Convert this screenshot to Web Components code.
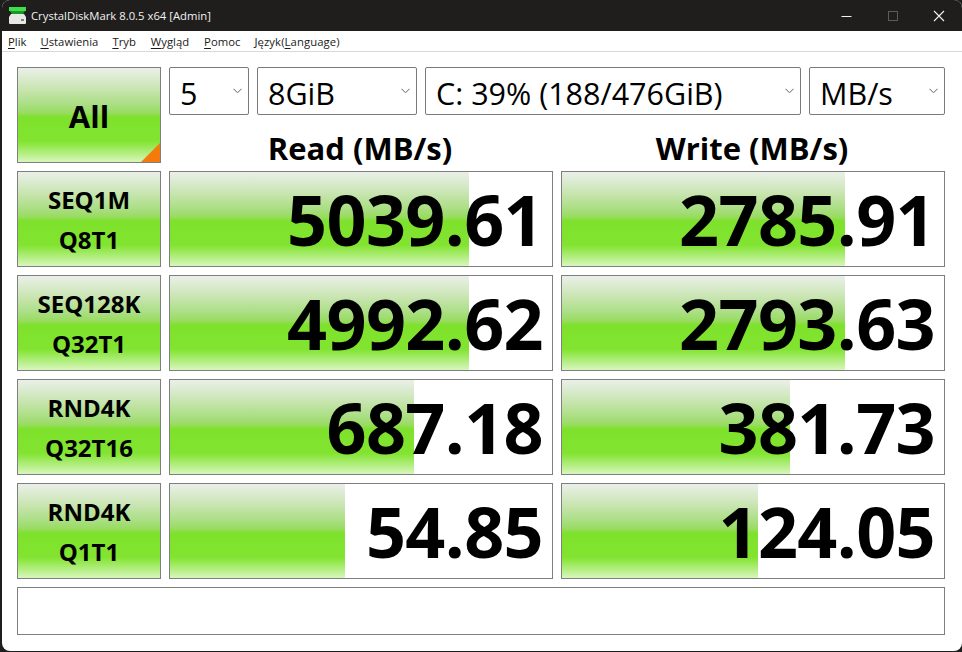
<!DOCTYPE html>
<html lang="pl">
<head>
<meta charset="utf-8">
<title>CrystalDiskMark</title>
<style>
  html, body { margin: 0; padding: 0; background: #1e1e1e; }
  body { font-family: "Open Sans", "Noto Sans", sans-serif; width: 962px; height: 652px; overflow: hidden; }
</style>
</head>
<body>
<cdm-window>
  <cdm-titlebar slot="title">CrystalDiskMark 8.0.5 x64 [Admin]</cdm-titlebar>
  <cdm-menubar slot="menu"></cdm-menubar>

  <cdm-button big corner>All</cdm-button>
  <cdm-controls>
    <cdm-select w="80">5</cdm-select>
    <cdm-select w="160">8GiB</cdm-select>
    <cdm-select w="376">C: 39% (188/476GiB)</cdm-select>
    <cdm-select w="136">MB/s</cdm-select>
  </cdm-controls>
  <cdm-heading>Read (MB/s)</cdm-heading>
  <cdm-heading>Write (MB/s)</cdm-heading>

  <cdm-button>SEQ1M<br>Q8T1</cdm-button>
  <cdm-meter fill="299">5039.61</cdm-meter>
  <cdm-meter fill="283">2785.91</cdm-meter>

  <cdm-button>SEQ128K<br>Q32T1</cdm-button>
  <cdm-meter fill="299">4992.62</cdm-meter>
  <cdm-meter fill="283">2793.63</cdm-meter>

  <cdm-button>RND4K<br>Q32T16</cdm-button>
  <cdm-meter fill="244">687.18</cdm-meter>
  <cdm-meter fill="228">381.73</cdm-meter>

  <cdm-button>RND4K<br>Q1T1</cdm-button>
  <cdm-meter fill="175">54.85</cdm-meter>
  <cdm-meter fill="196">124.05</cdm-meter>

  <cdm-status></cdm-status>
</cdm-window>

<script>
const GREEN = 'linear-gradient(180deg, #eaf0e8 0%, #cde6b8 20%, #a8de80 40%, #98dc60 48%, #7ee22c 52%, #82e430 78%, #a8ec70 88%, #d8f6bc 100%)';

const define = (name, css, html, setup) => {
    customElements.define(name, class extends HTMLElement {
        constructor() {
            super();
            this.attachShadow({ mode: 'open' });
        }
        connectedCallback() {
            this.shadowRoot.innerHTML = `<style>${css}</style>${html}`;
            if (setup) setup(this);
        }
    });
};

define('cdm-window', `
    :host { display: block; width: 960px; height: 651px; margin-left: 2px; background: #fff; border-radius: 8px; overflow: hidden; }
    .body {
        display: grid;
        grid-template-columns: 144px 384px 384px;
        grid-template-rows: 48px 48px repeat(4, 104px) 56px;
        gap: 0 8px;
        padding: 15px 0 0 15px;
    }
    ::slotted(cdm-button[big]) { grid-row: 1 / span 2; }
    ::slotted(cdm-controls) { grid-column: 2 / span 2; grid-row: 1; }
    ::slotted(cdm-heading) { grid-row: 2; }
    ::slotted(cdm-status) { grid-column: 1 / span 3; margin-top: 8px; height: 48px; }
    ::slotted(cdm-meter), ::slotted(cdm-button:not([big])) { margin-top: 8px; }
`, `
    <slot name="title"></slot>
    <slot name="menu"></slot>
    <div class="body"><slot></slot></div>
`);

define('cdm-titlebar', `
    :host { display: flex; align-items: center; height: 31px; background: #1f1e1d; color: #f2f2f2; font-size: 11.3px; }
    svg { margin: 0 4px 0 6px; flex: none; }
    .t { flex: 1; white-space: nowrap; }
    .b { width: 46px; height: 31px; display: flex; align-items: center; justify-content: center; flex: none; }
`, `
    <svg width="19" height="17" viewBox="0 0 19 17">
      <rect x="1" y="0" width="17" height="4" fill="#3ee04a"/>
      <path d="M2 4h15l-2 3H4z" fill="#159a2a"/>
      <path d="M3 7h13l2 3v6a1 1 0 0 1-1 1H2a1 1 0 0 1-1-1v-6z" fill="#e6e8e6"/>
      <rect x="13" y="12" width="3" height="2" fill="#7f837f"/>
    </svg>
    <span class="t"><slot></slot></span>
    <span class="b"><svg style="margin:0" width="12" height="12" viewBox="0 0 12 12"><path d="M0.5 6.5h10" stroke="#f2f2f2" stroke-width="1.2"/></svg></span>
    <span class="b"><svg style="margin:0" width="12" height="12" viewBox="0 0 12 12"><rect x="1.5" y="1.5" width="9" height="9" fill="none" stroke="#5c5b5a"/></svg></span>
    <span class="b"><svg style="margin:0" width="12" height="12" viewBox="0 0 12 12"><path d="M1 1l10 10M11 1L1 11" stroke="#f2f2f2" stroke-width="1.1"/></svg></span>
`);

define('cdm-menubar', `
    :host { display: flex; box-sizing: border-box; height: 21px; align-items: center; background: #fff; color: #1a1a1a; font-size: 11.3px; border-bottom: 1px solid #d9d9d9; padding-left: 6px; }
    span { margin-right: 14px; }
    span:nth-child(4), span:nth-child(5) { margin-right: 15px; }
    span:last-child { letter-spacing: 0.1px; }
    u { text-underline-offset: 2px; }
`, `
    <span><u>P</u>lik</span>
    <span><u>U</u>stawienia</span>
    <span><u>T</u>ryb</span>
    <span><u>W</u>ygląd</span>
    <span><u>P</u>omoc</span>
    <span>Język(<u>L</u>anguage)</span>
`);

define('cdm-button', `
    :host { display: flex; box-sizing: border-box; height: 96px; border: 1px solid #7f7f7f; background: ${GREEN}; position: relative;
            align-items: center; justify-content: center; text-align: center; font-weight: 700; color: #000; font-size: 24px; line-height: 40px; padding-top: 1px; }
    :host([big]) { font-size: 31px; }
    .c { position: absolute; right: 0; bottom: 0; width: 19px; height: 19px; background: #f57a0c; clip-path: polygon(100% 0, 100% 100%, 0 100%); }
`, `<div><slot></slot></div>`, (el) => {
    if (el.hasAttribute('corner')) {
        const c = document.createElement('span');
        c.className = 'c';
        el.shadowRoot.appendChild(c);
    }
});

define('cdm-controls', `
    :host { display: flex; gap: 8px; height: 48px; }
`, `<slot></slot>`);

define('cdm-select', `
    :host { display: flex; box-sizing: border-box; height: 48px; align-items: center; background: #fff; border: 1px solid #7a7a7a; border-radius: 2px;
            color: #000; font-size: 30.5px; padding: 0 6px 0 10px; white-space: nowrap; }
    .t { flex: 1; position: relative; top: 2px; }
    svg { flex: none; }
`, `<span class="t"><slot></slot></span>
    <svg width="9" height="6" viewBox="0 0 9 6"><path d="M0.5 0.8l4 4 4-4" fill="none" stroke="#606060"/></svg>`, (el) => {
    el.style.width = el.getAttribute('w') + 'px';
});

define('cdm-heading', `
    :host { display: flex; height: 48px; align-items: center; justify-content: center; font-size: 31px; font-weight: 700; color: #000; padding: 18px 2px 0 0; box-sizing: border-box; }
`, `<slot></slot>`);

define('cdm-meter', `
    :host { display: block; box-sizing: border-box; height: 96px; border: 1px solid #7f7f7f; background: #fff; position: relative; color: #000; }
    .bar { position: absolute; left: 0; top: 0; bottom: 0; background: ${GREEN}; }
    .v { position: relative; display: flex; height: 100%; align-items: center; justify-content: flex-end; padding-right: 9px; box-sizing: border-box;
         font-size: 70px; font-weight: 700; letter-spacing: -0.6px; line-height: 1; }
`, `<div class="bar"></div><div class="v"><slot></slot></div>`, (el) => {
    el.shadowRoot.querySelector('.bar').style.width = el.getAttribute('fill') + 'px';
});

define('cdm-status', `
    :host { display: block; box-sizing: border-box; border: 1px solid #7f7f7f; background: #fff; }
`, ``);
</script>
</body>
</html>
